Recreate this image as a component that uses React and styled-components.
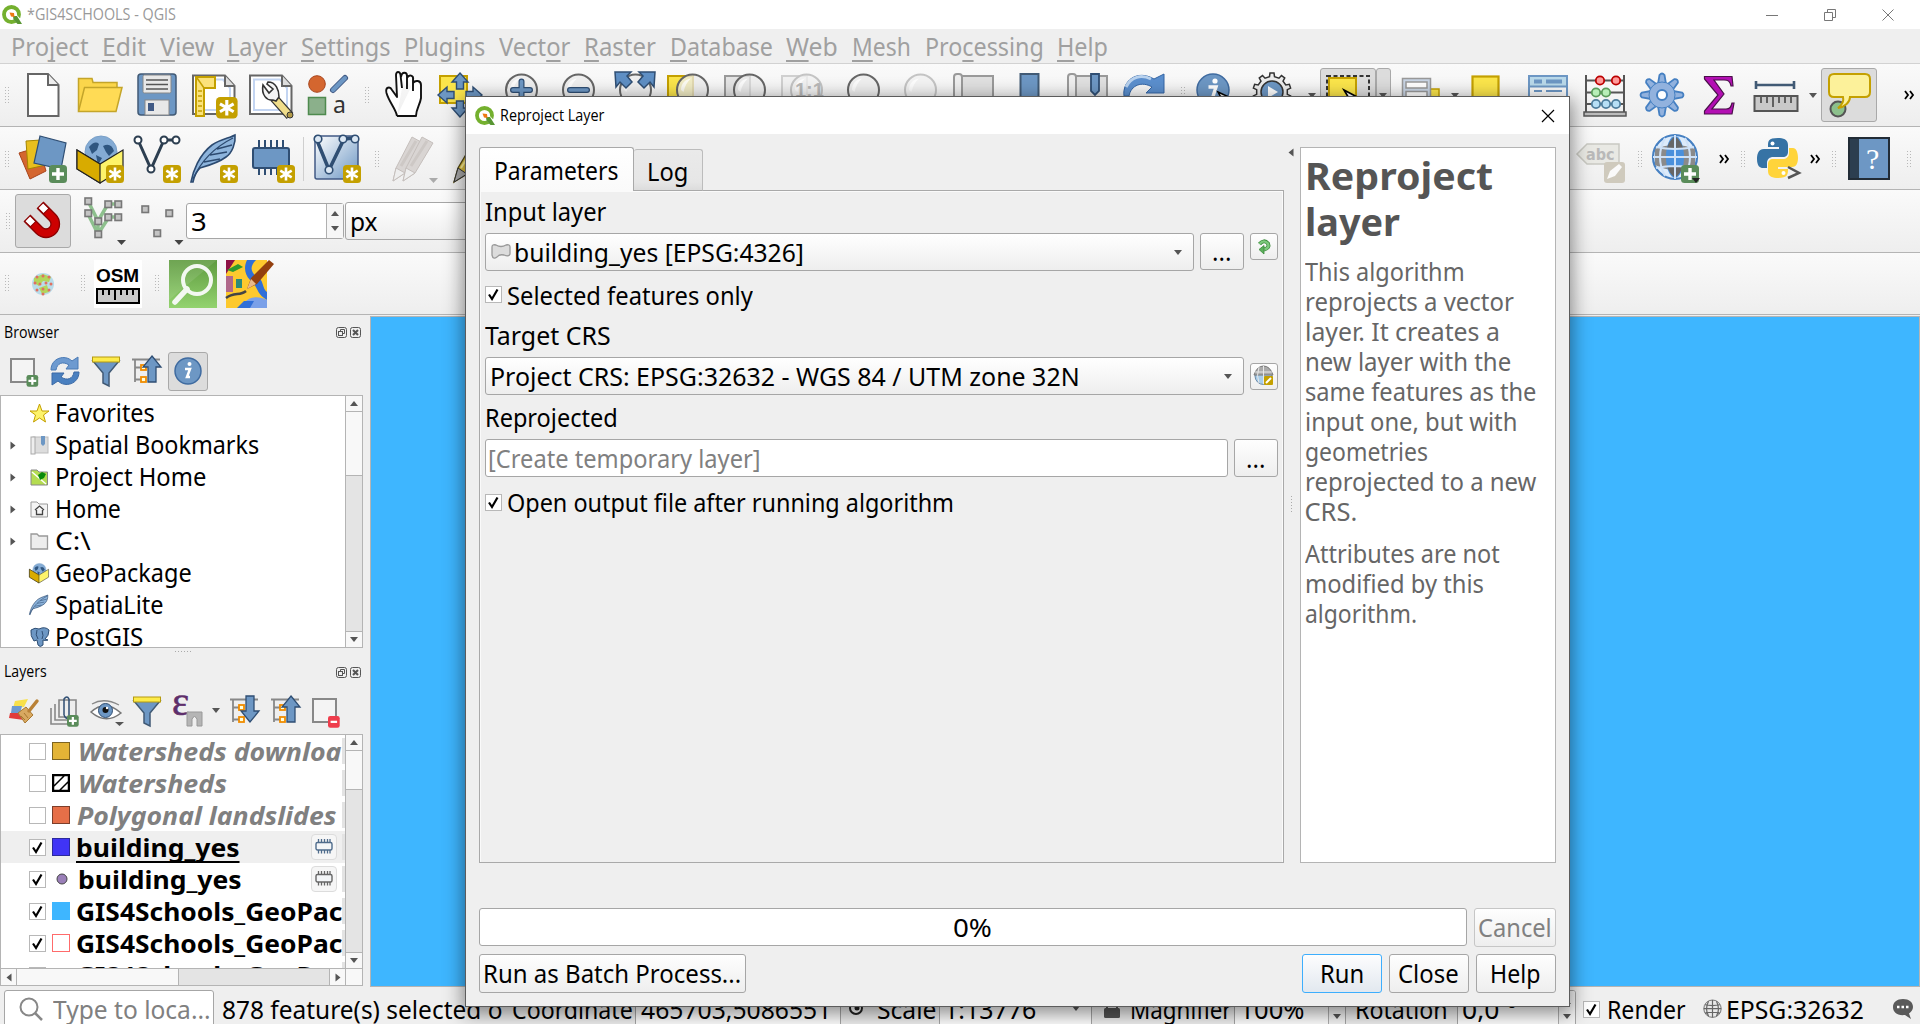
import React, { useLayoutEffect, useRef, useState } from "react";
import styled, { createGlobalStyle, css } from "styled-components";

const UI = `"Noto Sans", "DejaVu Sans", sans-serif`;
const LINE = "#b4b4b4";

const Global = createGlobalStyle`
  *{box-sizing:border-box}
  html,body{margin:0;padding:0;width:1920px;height:1024px;overflow:hidden;background:#efefef}
  body{font-family:${UI};font-size:25.5px;line-height:1;color:#000}
  svg{display:block;overflow:visible;flex:none}
`;

/* ---------- text ---------- */
const FitBox = styled.span`
  display: inline-block; flex: none; white-space: pre; line-height: 32px; padding-bottom: 1px;
  width: ${(p) => p.$w}px;
`;
const FitInner = styled.span`
  display: inline-block; transform-origin: 0 50%; margin-left: -1.5px;
  u { text-decoration-thickness: 2px; text-underline-offset: 4px; text-decoration-skip-ink: none; }
`;
function Fit({ w, children }) {
  const ref = useRef(null);
  const [scale, setScale] = useState(1);
  useLayoutEffect(() => {
    setScale(w / (ref.current.offsetWidth - 2));
  }, [w]);
  return (
    <FitBox $w={w}>
      <FitInner ref={ref} style={{ transform: `scaleX(${scale})` }}>{children}</FitInner>
    </FitBox>
  );
}

/* ---------- frame ---------- */
const Window = styled.div`
  width: 1920px; height: 1024px; display: flex; flex-direction: column; position: relative; overflow: hidden; background: #efefef;
`;
const TitleBar = styled.header`
  height: 29px; background: #fff; display: flex; align-items: center; padding: 0 8px 0 2px; gap: 6px;
  font-family: "Open Sans", sans-serif; font-size: 15.5px; color: #999; flex: none;
`;
const WinButtons = styled.div`margin-left: auto; display: flex; gap: 46px; padding-right: 18px;`;
const MenuBar = styled.nav`
  height: 35px; display: flex; align-items: center; gap: 15.6px; padding: 0 0 0 12px; color: #a0a0a0; font-size: 25.3px;
  border-bottom: 1px solid #d2d2d2; flex: none;
`;
const Toolbar = styled.div`
  height: ${(p) => p.$h || 63}px; display: flex; align-items: center; flex: none; padding-top: ${(p) => p.$t || 0}px;
  background: linear-gradient(#fafafa, #eee); border-bottom: 1px solid ${LINE};
`;
const Slot = styled.div`
  width: ${(p) => p.$w || 57}px; height: 100%; display: flex; align-items: center; justify-content: center; flex: none;
`;
const Pressed = styled.div`
  width: ${(p) => p.$w}px; height: ${(p) => p.$h || 54}px; border: 1px solid #a9a9a9; border-radius: 3px; background: #dcdcdc;
  display: flex; align-items: center; justify-content: center; flex: none;
`;
const HandleGrip = styled.svg`margin-left: 1px;`;
const Handle = () => (
  <HandleGrip width="5" height="17" viewBox="0 0 5 17" shapeRendering="crispEdges">
    <path d="M.5 0V17M3.5 0V17" stroke="#b9b9b9" strokeDasharray="1 2" />
  </HandleGrip>
);
const Sep = styled.div`width: 1px; height: 44px; background: #cfcfcf;`;
const Tri = styled.div`
  width: 0; height: 0; flex: none; border: 4.5px solid transparent; border-top: 5px solid ${(p) => p.$c || "#555"}; border-bottom: 0;
  margin-top: ${(p) => p.$t || 0}px;
  ${(p) => p.$dir === "up" && css`transform: rotate(180deg);`}
  ${(p) => p.$dir === "left" && css`transform: rotate(90deg);`}
  ${(p) => p.$dir === "right" && css`transform: rotate(-90deg);`}
`;
const Spacer = styled.div`flex: 1;`;
const Main = styled.main`flex: none; height: 672px; display: flex;`;
const Side = styled.aside`width: 370px; display: flex; flex-direction: column; padding-right: 7px;`;
const MapView = styled.div`
  flex: 1; margin-top: 1px; background: #3eb6ff; border: 1px solid ${LINE};
`;
const Dots = styled.div`
  flex: none; width: ${(p) => (p.$v ? 1 : 17)}px; height: ${(p) => (p.$v ? 17 : 1)}px; margin: 0 auto;
  background: repeating-linear-gradient(${(p) => (p.$v ? "180deg" : "90deg")}, #aaa 0 1px, transparent 1px 3px);
`;

/* ---------- docks ---------- */
const DockTitle = styled.div`
  height: ${(p) => p.$h}px; display: flex; align-items: center; padding: ${(p) => p.$t}px 2px 0 5px; font: 15.5px "Open Sans", sans-serif; gap: 3px; flex: none;
  ${FitBox} { padding-bottom: 2px; }
`;
const DockTools = styled.div`
  height: ${(p) => p.$h}px; display: flex; align-items: center; padding: 0 0 2px 3px; flex: none;
`;
const ListFrame = styled.div`
  height: ${(p) => p.$h}px; border: 1px solid ${LINE}; background: #fff; display: flex; flex: none;
`;
const Rows = styled.div`flex: 1; overflow: hidden; padding-top: ${(p) => p.$t || 0}px;`;
const TreeRow = styled.div`
  height: 32px; display: flex; align-items: center; padding-left: 8px;
  ${FitBox} { padding-bottom: 2px; }
`;
const TreeArrow = styled.div`width: 20px;display:flex;`;
const TreeIcon = styled.div`width: 27px; display:flex;`;
const LayerRow = styled.div`
  height: 32px; display: flex; align-items: center; padding-left: 28px; overflow: hidden;
  background: ${(p) => (p.$sel ? "#efefef" : "#fff")}; font-weight: 700; color: ${(p) => (p.$off ? "#808080" : "#000")};
  font-style: ${(p) => (p.$off ? "italic" : "normal")};
`;
const Swatch = styled.div`
  width: 18px; height: 18px; margin: 0 ${(p) => p.$mr}px 0 6px; border: 1px solid ${(p) => p.$b}; background: ${(p) => p.$c}; flex: none;
`;
const RowName = styled.div`width: 0; flex: 1; overflow: hidden; height: 32px; padding-left: 2px; display: flex; align-items: center;`;
const MemButton = styled.div`
  width: 26px; height: 26px; border: 1px solid #dcdcdc; border-radius: 4px; background: #f6f6f6; display: flex; align-items: center; justify-content: center; margin-right: 5px;
`;
const RowMark = styled.div`width: 3px; height: 26px; background: #e3e3e3; flex: none; margin-left: auto;`;
const VScroll = styled.div`width: 17px; border-left: 1px solid ${LINE}; display: flex; flex-direction: column; background: #e4e4e4; flex: none;`;
const HScroll = styled.div`height: 17px; display: flex; background: #e4e4e4; border: 1px solid ${LINE}; border-top: 0; flex: none;`;
const SBtn = styled.div`
  width: ${(p) => p.$w || 16}px; height: ${(p) => p.$h || 16}px; background: #f8f8f8; display: flex; align-items: center; justify-content: center; flex: none;
  ${(p) => p.$b && css`border-${p.$b}: 1px solid ${LINE};`}
`;

/* ---------- controls ---------- */
const Field = styled.div`
  height: ${(p) => p.$h || 38}px; width: ${(p) => (p.$w ? p.$w + "px" : "auto")}; border: 1px solid #a6a6a6; border-radius: 3px;
  background: ${(p) => (p.$combo ? "linear-gradient(#fff,#eee)" : "#fff")}; display: flex; align-items: center; padding-left: ${(p) => p.$pl || 5}px;
  color: ${(p) => p.$c || "#000"}; flex: ${(p) => (p.$w ? "none" : 1)};
`;
const Button = styled.button`
  margin: 0; padding: 0; font: inherit; width: ${(p) => p.$w}px; height: ${(p) => p.$h || 39}px; flex: none;
  border: 1px solid ${(p) => (p.$primary ? "#3daefd" : p.$dim ? "#c6c6c6" : "#a6a6a6")}; border-radius: 3px;
  background: ${(p) => (p.$primary ? "linear-gradient(#fdfdfe,#e2e8ef)" : "linear-gradient(#fefefe,#eee)")};
  color: ${(p) => (p.$dim ? "#808080" : "#000")}; display: flex; align-items: center; justify-content: center;
`;
const CheckFrame = styled.div`
  width: 17px; height: 17px; border: 1px solid #b8b8b8; background: #fff; display: flex; align-items: center; justify-content: center; flex: none;
`;
function Check({ on }) {
  return (
    <CheckFrame>
      {on && (
        <svg width="13" height="13" viewBox="0 0 13 13"><path d="M2 6.5L5 11L10.5 1.5" fill="none" stroke="#000" strokeWidth="2.2" /></svg>
      )}
    </CheckFrame>
  );
}
const SpinSide = styled.div`
  width: 17px; height: 100%; border-left: 1px solid #b0b0b0; margin-left: auto; display: flex; flex-direction: column; justify-content: center; align-items: center; gap: 10px; background: #f6f6f6;
`;

/* ---------- dialog ---------- */
const Dialog = styled.section`
  position: absolute; left: 465px; top: 96px; width: 1105px; height: 911px; border: 1px solid #5c5c5c; background: #efefef;
  box-shadow: 0 5px 18px 2px rgba(0, 0, 0, 0.45); display: flex; flex-direction: column;
`;
const DialogTitle = styled.div`
  height: 37px; background: #fff; display: flex; align-items: center; padding: 0 15px 0 9px; gap: 6px; font: 15.5px "Open Sans", sans-serif; flex: none;
`;
const DialogBody = styled.div`height: 716px; margin: 13px 13px 0; display: flex; flex: none;`;
const TabSide = styled.div`width: 805px; display: flex; flex-direction: column;`;
const Tabs = styled.div`height: 44px; display: flex; align-items: flex-end; margin-bottom: -1px; z-index: 1;`;
const Tab = styled.div`
  width: ${(p) => p.$w}px; height: ${(p) => (p.$on ? 44 : 42)}px; border: 1px solid ${(p) => (p.$on ? "#a9a9a9" : "#bcbcbc")};
  border-bottom: ${(p) => (p.$on ? 0 : "1px solid #a9a9a9")}; border-left: ${(p) => (p.$on ? "1px solid #a9a9a9" : 0)}; border-radius: 3px 3px 0 0;
  background: ${(p) => (p.$on ? "linear-gradient(#fff,#fafafa)" : "linear-gradient(#eaeaea,#e6e6e6 80%,#dcdcdc)")};
  display: flex; align-items: center; justify-content: center; padding-top: 3px;
  ${FitBox} { padding-bottom: ${(p) => (p.$on ? 2 : 1)}px; }
`;
const Pane = styled.div`
  flex: 1; border: 1px solid #a9a9a9; box-shadow: inset 1px 1px 0 #fafafa, inset -1px 0 0 #fafafa; padding: 0 6px 0 5px;
`;
const Label = styled.div`
  height: ${(p) => p.$h}px; display: flex; align-items: center; padding-left: 1px; padding-bottom: ${(p) => p.$pb || 0}px;
`;
const Row = styled.div`height: 38px; display: flex; align-items: ${(p) => p.$a || "flex-start"}; gap: 6px;`;
const CheckLine = styled.div`height: ${(p) => p.$h}px; display: flex; align-items: center; gap: 6px;`;
const CheckText = styled.div`padding-top: 1px; display: flex;`;
const Split = styled.div`width: 16px; display: flex; flex-direction: column; align-items: center; padding-top: 3px; padding-right: 2px;`;
const HelpBox = styled.article`
  width: 256px; border: 1px solid #b4b4b4; background: #fff; color: #666; padding: 5px;
`;
const HelpTitle = styled.h1`
  margin: 0; font-size: 37px; color: #555; font-weight: 700; display: flex; flex-direction: column;
  ${FitBox} { line-height: 46px; padding: 0; }
`;
const Para = styled.div`
  display: flex; flex-direction: column; margin-top: ${(p) => p.$t}px;
  ${FitBox} { line-height: 30px; padding: 0; }
`;
const ProgressRow = styled.div`height: 38px; margin: 45px 13px 0; display: flex; gap: 7px; flex: none;`;
const Progress = styled.div`
  width: 988px; border: 1px solid #a6a6a6; border-radius: 3px; background: #fff; display: flex; align-items: center; justify-content: center;
`;
const ButtonRow = styled.div`height: 39px; margin: 8px 13px 0; display: flex; gap: 7px; flex: none;`;

/* ---------- status ---------- */
const Status = styled.footer`height: 37px; display: flex; align-items: flex-start; overflow: hidden; flex: none; padding: 3px 0 0 4px;`;
const StatusCell = styled.div`
  width: ${(p) => p.$w}px; height: 38px; display: flex; align-items: center; flex: none; padding-left: ${(p) => p.$pl || 0}px; overflow: hidden;
  ${(p) => p.$box && css`background: #fff; border: 1px solid #a6a6a6; border-radius: 3px;`}
  color: ${(p) => p.$c || "#000"};
`;

/* ---------- drawings ---------- */
const I = ({ s = 48, children, vb = 48 }) => (
  <svg width={s} height={s} viewBox={`0 0 ${vb} ${vb}`}>{children}</svg>
);
const Star = ({ x = 30, y = 28 }) => (
  <g transform={`translate(${x} ${y})`}>
    <rect width="18" height="18" rx="3.5" fill="#c4a000" />
    <path d="M9 2.5V15.5M3.3 5.7L14.7 12.3M3.3 12.3L14.7 5.7" stroke="#fff" strokeWidth="2.6" />
  </g>
);
const Plus = ({ x = 30, y = 28, s = 1, minus }) => (
  <g transform={`translate(${x} ${y}) scale(${s})`}>
    <rect width="18" height="18" rx="3.5" fill={minus ? "#ef3d4c" : "#5a8c5a"} />
    {minus ? <path d="M4 9H14" stroke="#fff" strokeWidth="3.4" /> : <path d="M9 3V15M3 9H15" stroke="#fff" strokeWidth="3.4" />}
  </g>
);
const QLogo = ({ s = 20 }) => (
  <I s={s} vb={20}>
    <circle cx="9.5" cy="9.5" r="7.5" fill="none" stroke="#74b02e" strokeWidth="3.8" />
    <path d="M10 9L20 19.5" stroke="#fff" strokeWidth="5.5" />
    <path d="M11 11L15 11L20 19H15.500L11.500 15Z" fill="#589632" />
    <path d="M7.500 7.500L12 8L12.500 12L9 11.500Z" fill="#ee7913" />
  </I>
);
const NewDoc = () => <I><path d="M9 3H29L39.5 14V45H9Z" fill="#fff" stroke="#666" strokeWidth="2" /><path d="M29 3V14H39.5" fill="#eee" stroke="#666" strokeWidth="2" /></I>;
const Open = () => <I><path d="M2.5 40V7.5H16L17 11.5H41V17" fill="#fbd64b" stroke="#c4a52a" strokeWidth="1.5" /><path d="M8.5 16.5H46L40 40.5H2.5Z" fill="#ffdb55" stroke="#c4a52a" strokeWidth="1.5" /></I>;
const Save = () => (
  <I>
    <rect x="5" y="3" width="38" height="41" rx="3" fill="#6d97c4" stroke="#415a75" strokeWidth="1.5" />
    <rect x="10" y="4" width="28" height="18" rx="1.5" fill="#e8e8e8" stroke="#888" />
    <path d="M13 9H35M13 13.5H35M13 18H35" stroke="#555" strokeWidth="1.6" />
    <rect x="12" y="29" width="24" height="15" fill="#e8e8e8" stroke="#888" /><rect x="15" y="32" width="6" height="8" fill="#415a85" />
  </I>
);
const Page = () => <><path d="M3 4.5H35L44.5 15V43H3Z" fill="#fff" stroke="#666" strokeWidth="2" /><path d="M7 8.5H33L40 17V39H7Z" fill="none" stroke="#c3d5f2" strokeWidth="2" /><path d="M35 4.5V15H44.5" fill="#ddd" stroke="#666" strokeWidth="2" /></>;
const Layout = () => <I><Page /><path d="M6 6H25V17H14V45H6Z" fill="#fbe27a" stroke="#c4a000" strokeWidth="2" /><path d="M7 7L14 17" stroke="#c4a000" strokeWidth="1.500" /><path d="M8 20H12M8 25H12M8 30H12M8 35H12M8 40H12" stroke="#c4a000" strokeWidth="1.5" /><g transform="translate(26 26) scale(1.2)"><Star x={0} y={0} /></g></I>;
const Manager = () => (
  <I><Page /><path d="M27 27L43 45" stroke="#333" strokeWidth="9" /><path d="M27 27L42.500 44.500" stroke="#f0dd8a" strokeWidth="6.5" />
    <path d="M16 14C14 24 20 30 26 29L29 30L32 26C32 19 29 11 21 11L20 13L26 18L22 22Z" fill="#f4f4f4" stroke="#333" strokeWidth="1.6" /><circle cx="43" cy="44" r="3" fill="#b39b48" stroke="#333" /></I>
);
const StyleMgr = () => (
  <I><circle cx="13" cy="13" r="8.300" fill="#d4662f" stroke="#a8441c" /><path d="M29 19L41 7" stroke="#415a85" strokeWidth="6" strokeLinecap="round" /><path d="M29 19L41 7" stroke="#6d97c4" strokeWidth="4" strokeLinecap="round" />
    <rect x="4.500" y="26.500" width="17" height="17" fill="#8bb08b" stroke="#4e8a4e" strokeWidth="1.5" /><text x="29" y="42" fontSize="23" fill="#333" fontFamily="Noto Sans">a</text></I>
);
const Hand = () => (
  <I><path d="M16 45C15 38 8 31 5.500 22C4 16 9 15 11 19L16 26L15 4C15 0 19 0 19.500 4L21 17M20 6C21 0 26 1 26 5V18M26 7C28 3 33 4 32 9V20M32 12C34 9 40 9 40 14V27C39 34 35 38 35 45H16" fill="#fff" stroke="#111" strokeWidth="1.9" strokeLinejoin="round" /></I>
);
const Pan = () => (
  <I><rect x="3" y="5" width="27" height="27" fill="#fbe54b" stroke="#c4a000" strokeWidth="2" />
    {[0, 90, 180, 270].map((a) => <path key={a} transform={`rotate(${a} 23 24)`} d="M23 2L31 11H26.500V18H19.500V11H15Z" fill="#6d97c4" stroke="#2f4e73" strokeWidth="1.4" />)}</I>
);
const Lens = ({ dim, children, pre }) => (
  <I>{pre}<circle cx="27.500" cy="19" r="15.500" fill={dim ? "#f2f2f2" : "#ececec"} fillOpacity=".75" stroke={dim ? "#c4c4c4" : "#666"} strokeWidth="2" />
    <path d="M16 19C16 13 20 8 26 7.500C22 11 20 15 18.500 21Z" fill="#fff" opacity=".8" />{children}</I>
);
const ZoomSign = ({ minus }) => (
  <Lens><path d={minus ? "M19 19H36" : "M19 19H36M27.500 10.500V27"} stroke="#2f4e73" strokeWidth="6" strokeLinecap="round" /><path d={minus ? "M19 19H36" : "M19 19H36M27.500 10.500V27"} stroke="#6d97c4" strokeWidth="3.6" strokeLinecap="round" /></Lens>
);
const ZoomFull = () => <Lens><path d="M7 1H23L19 5L24 11L18 17L12 11L8 16Z" fill="#5f8fc4" stroke="#2f4e73" strokeWidth="1.5" /><path d="M47 1H31L35 5L30 11L36 17L42 11L46 16Z" fill="#5f8fc4" stroke="#2f4e73" strokeWidth="1.5" /></Lens>;
const Sq = ({ f, s }) => <rect x="3" y="5" width="25" height="25" fill={f} stroke={s} strokeWidth="2" />;
const Book = ({ mark }) => (
  <I><rect x="8" y="5" width="35" height="38" fill="#e0e0e0" stroke="#999" strokeWidth="2" /><rect x="4" y="3" width="8" height="40" rx="3" fill="#eee" stroke="#999" strokeWidth="2" />
    {mark && <path d="M27 3H35V20L31 24L27 20Z" fill="#6d97c4" stroke="#2f4e73" strokeWidth="1.800" />}</I>
);
const Marker = () => <I><rect x="13.500" y="3" width="18" height="40" fill="#6d97c4" stroke="#415a75" strokeWidth="2" /></I>;
const Redo = () => <I><path d="M3 25C1 10 16 -2 33 8L43 3V22H25L31 16C21 10 10 14 8 25Z" fill="#5b8fce" stroke="#3465a4" strokeWidth="1" /><path d="M5 16C10 6 20 3 30 8" stroke="#b9d2ee" strokeWidth="3" fill="none" /></I>;
const Info = ({ s, arrow }) => (
  <I s={s}><circle cx="24" cy="19" r="16" fill="#6d97c4" stroke="#3f6ba0" strokeWidth="1.500" />
    <circle cx="26" cy="10" r="2.600" fill="#fff" /><path d="M19.500 16H27L23.500 27H26.500" stroke="#fff" strokeWidth="3.400" fill="none" />{arrow && <path d="M29 21L40 26L34 30Z" fill="#eee" stroke="#000" strokeWidth="1.500" />}</I>
);
const gearPath = (n, r1, r2, k) => {
  const pts = [];
  for (let i = 0; i < n; i++)
    [[-k, r1], [-k * 0.65, r2], [k * 0.65, r2], [k, r1]].forEach(([o, r]) => {
      const a = ((i + o) / n) * 2 * Math.PI;
      pts.push(`${(24 + r * Math.sin(a)).toFixed(2)} ${(24 - r * Math.cos(a)).toFixed(2)}`);
    });
  return `M${pts.join("L")}Z`;
};
const GearRun = () => <I><g transform="translate(3 -3)"><path d={gearPath(10, 15.500, 19, 0.26)} fill="#ececec" stroke="#333" strokeWidth="1.500" /><circle cx="24" cy="24" r="11" fill="#6d97c4" stroke="#333" strokeWidth="1.500" /><path d="M20 18L30 24L20 30Z" fill="#fff" /></g></I>;
const SelectIcon = () => <I><rect x="3" y="5" width="42" height="30" fill="#dcdcdc" stroke="#333" strokeWidth="2" strokeDasharray="4 2.500" /><rect x="5" y="7" width="27" height="26" fill="#fbe54b" stroke="#c4a000" strokeWidth="2" /><path d="M20 19L35 27L26 29Z" fill="#fff" stroke="#000" strokeWidth="1.600" /></I>;
const FormIcon = () => <I><rect x="24" y="18" width="20" height="16" fill="#fbe54b" stroke="#c4a000" strokeWidth="1.500" /><rect x="7.500" y="7.500" width="28" height="36" fill="#c9d5e5" stroke="#999" strokeWidth="1.500" /><rect x="11" y="11" width="21" height="6" fill="#fff" stroke="#999" strokeWidth="1.500" /><rect x="11" y="20.500" width="21" height="6" fill="#fff" stroke="#999" strokeWidth="1.500" /></I>;
const Yellow = () => <I><rect x="5.500" y="5.500" width="26" height="26" fill="#fbe54b" stroke="#c4a000" strokeWidth="2.200" /></I>;
const Table = () => <I><rect x="5" y="5" width="38" height="38" fill="#fafafa" stroke="#6d97c4" strokeWidth="2" /><rect x="6" y="6" width="36" height="9" fill="#b9d9ea" /><path d="M10 10.500H18M22 10.500H38" stroke="#6d97c4" strokeWidth="4" /><path d="M6 15.500H42M10 20H18M22 20H38M10 26H18M22 26H38" stroke="#6d97c4" strokeWidth="2" /></I>;
const Abacus = () => (
  <I><path d="M5 4V41M43 4V41M5 9.500H43M5 21.500H43M5 33H43" stroke="#555" strokeWidth="2" />
    {[[19, 9.5, "#ff9a9a", "#b00"], [35, 9.5, "#ff9a9a", "#b00"], [15, 21.5, "#b8eeb8", "#5a9a5a"], [25, 21.5, "#b8eeb8", "#5a9a5a"], [15, 33, "#b8dff5", "#4f7d9c"], [25, 33, "#b8dff5", "#4f7d9c"], [35, 33, "#b8dff5", "#4f7d9c"]].map(([x, y, f, s], i) => <circle key={i} cx={x} cy={y} r="4.200" fill={f} stroke={s} strokeWidth="1.800" />)}
    <rect x="3" y="41" width="42" height="4" fill="#bbb" stroke="#555" strokeWidth="1.500" /></I>
);
const BlueGear = () => (
  <I>{[0, 45, 90, 135, 180, 225, 270, 315].map((a) => <path key={a} transform={`rotate(${a} 24 24)`} d="M20 13L21.500 4Q24 1 26.500 4L28 13" fill="#92b2de" stroke="#4680c2" strokeWidth="1.800" />)}
    <circle cx="24" cy="24" r="13" fill="#92b2de" stroke="#4680c2" strokeWidth="1" /><circle cx="24" cy="24" r="12" fill="#92b2de" /><circle cx="24" cy="24" r="5" fill="#fff" stroke="#4680c2" strokeWidth="2" /></I>
);
const Sigma = () => <I><path d="M9.500 5.500H37L38 15H36C35 10 33 9 29 9H19L29 23L17 38H31C35 38 36 36 37 32H39L37 43H9.500V40L23 24L9.500 8Z" fill="#b30fb3" stroke="#4a124a" strokeWidth="1.200" /></I>;
const Ruler = () => <I><path d="M4 14H42M4 10V18M42 10V18" stroke="#415a75" strokeWidth="2.600" /><rect x="2.500" y="25" width="43" height="15" fill="#c9c9c9" stroke="#555" strokeWidth="2" /><path d="M9 26V32M15 26V32M21 26V36M27 26V32M33 26V32M39 26V32" stroke="#555" strokeWidth="1.800" /></I>;
const Tip = () => <I><circle cx="13" cy="38" r="7.500" fill="#8cc08c" stroke="#555" strokeWidth="2" /><path d="M11 3H42Q47 3 47 8V21Q47 26 42 26H27C27 31 22 36 15 37C19 34 21 30 20 26H11Q6 26 6 21V8Q6 3 11 3Z" fill="#fcf19a" stroke="#c4a000" strokeWidth="2" transform="translate(-2 0)" /></I>;
const More = () => <I s={12} vb={12}><path d="M2 2L5 6L2 10M7 2L10 6L7 10" fill="none" stroke="#000" strokeWidth="1.800" /></I>;

const AddLayer = () => <I><path d="M0 18L20 12L27 36L11 44Z" fill="#d4662f" stroke="#a8441c" /><path d="M7 6L22 5L27 30L9 34Z" fill="#e8bf1e" stroke="#a58500" /><path d="M21 1L47 8L42 34L15 28Z" fill="#6d97c4" stroke="#2f4e73" strokeWidth="1.200" /><Plus x={30} y={30} /></I>;
const Globe = ({ cx = 25, cy = 17, r = 16 }) => <g><circle cx={cx} cy={cy} r={r} fill="#84abd4" stroke="#7aa0c8" /><path d={`M${cx - 12} ${cy - 5}Q${cx - 6} ${cy - 12} ${cx - 2} ${cy - 8}L${cx - 4} ${cy - 2}L${cx - 9} ${cy + 2}ZM${cx + 2} ${cy - 6}Q${cx + 10} ${cy - 10} ${cx + 13} ${cy - 1}L${cx + 8} ${cy + 4}L${cx + 5} ${cy}ZM${cx - 5} ${cy + 3}L${cx + 1} ${cy + 6}L${cx - 3} ${cy + 13}Z`} fill="#2f5680" /></g>;
const Gpkg = ({ s, star }) => (
  <I s={s}><Globe /><path d="M1 15L24 29L47 15V34L24 48L1 34Z" fill="#fdf36a" stroke="#222" strokeWidth="1.200" /><path d="M1 15L24 29V48L1 34Z" fill="#d8ab00" stroke="#222" strokeWidth="1.200" />{star && <Star x={30} y={30} />}</I>
);
const Shp = () => <I><path d="M5 5L18 34L31 5H43" fill="none" stroke="#2c3e50" strokeWidth="3" />{[[5, 5], [18, 34], [31, 5], [43, 5]].map(([x, y]) => <circle key={x} cx={x} cy={y} r="3.500" fill="#fff" stroke="#2c3e50" strokeWidth="2" />)}<Star x={30} y={30} /></I>;
const Feather = ({ s, star }) => <I s={s}><path d="M1 47C3 36 9 20 22 10C31 4 40 3 45 0C46 8 42 18 36 22C28 28 17 31 10 33C6 37 4 42 3 47Z" fill="#8db4dc" stroke="#2c4a70" strokeWidth="1.600" /><path d="M3 44C11 26 25 12 43 3M14 27L30 24M20 20L37 17M27 14L42 10" stroke="#2c4a70" strokeWidth="1.300" fill="none" />{star && <Star x={30} y={30} />}</I>;
const Chip = () => <I><path d="M12 5V14M18 5V14M24 5V14M30 5V14M36 5V14M12 30V40M18 30V40M24 30V40M30 30V40M36 30V40" stroke="#2f4e73" strokeWidth="2" /><rect x="6" y="13" width="36" height="20" rx="2" fill="#6d97c4" stroke="#2f4e73" strokeWidth="2" /><Star x={30} y={30} /></I>;
const MemChip = ({ c }) => <I s={18} vb={18}><path d="M3.500 1V4M6.500 1V4M9.500 1V4M12.500 1V4M15 1V4M3.500 12V15.500M6.500 12V15.500M9.500 12V15.500M12.500 12V15.500M15 12V15.500" stroke={c} strokeWidth="1.300" /><rect x="1" y="4.500" width="16" height="7.500" rx="1.500" fill="#f4f6f8" stroke={c} strokeWidth="1.400" /></I>;
const Virtual = () => (
  <I><defs><linearGradient id="vg" x2="1" y2="1"><stop offset="0" stopColor="#fff" /><stop offset="1" stopColor="#6d97c4" /></linearGradient></defs><rect x="2" y="1" width="43" height="43" rx="2" fill="url(#vg)" stroke="#415a85" strokeWidth="1.500" />
    <path d="M3 3L16 35L31 4L41 3" fill="none" stroke="#2f4e73" strokeWidth="3.500" />{[[5, 4], [16, 35], [30, 4], [42, 4]].map(([x, y]) => <circle key={x} cx={x} cy={y} r="3.800" fill="#dce8f4" stroke="#2f4e73" strokeWidth="1.600" />)}<Star x={30} y={30} /></I>
);
const Pencils = () => <I><g fill="#d9d5d3" stroke="#c5bfbc"><path d="M5 46L8 33L24 2L33 7L17 38Z" /><path d="M15 46L18 33L34 2L45 8L27 38Z" /><path d="M5 46L8 33L17 38ZM15 46L18 33L27 38Z" fill="#eee" /></g><path d="M13 31L28 6M23 31L39 6" stroke="#cdc8c5" strokeWidth="3" /><path d="M41 43H50L45.500 48Z" fill="#aaa" /></I>;
const Pencil = () => <I><path d="M1 47L5 33L24 1L34 7L14 39Z" fill="#e0c341" stroke="#554a14" strokeWidth="1.300" /><path d="M1 47L5 33L14 39Z" fill="#aaa" stroke="#333" /><path d="M8 33L26 4" stroke="#fff29a" strokeWidth="2" /></I>;
const LabelIcon = () => <I><path d="M0 19L10 9H42V29H10Z" fill="#e9e9e4" stroke="#c9c9c2" strokeWidth="1.500" /><text x="9" y="25" fontSize="16" fontWeight="700" fill="#b9b9b9" fontFamily="DejaVu Sans Condensed, DejaVu Sans">abc</text><rect x="27" y="27" width="21" height="21" rx="3" fill="#cfcabd" /><path d="M30 44L33 36L42 29L45 32L38 41Z" fill="#fafafa" /></I>;
const WebGlobe = ({ s, plus, grey }) => (
  <I s={s}><circle cx="24" cy="22" r="22" fill={grey ? "#e8e8e8" : "#dcebfb"} stroke={grey ? "#666" : "#4680c2"} strokeWidth="2.200" />
    {!grey && <><path d="M4 14Q24 6 44 14V30Q24 40 4 30Z" fill="#8a8a8a" /><ellipse cx="24" cy="22" rx="9" ry="21" fill="#4a90dc" /><path d="M24 1Q30 6 32 13H16Q18 6 24 1ZM24 43Q30 38 32 31H16Q18 38 24 43Z" fill="#666" /></>}
    <path d="M2 22H46M24 0V44M5 12Q24 16 43 12M5 33Q24 29 43 33M14 3Q4 22 14 41M34 3Q44 22 34 41" fill="none" stroke={grey ? "#666" : "#cfe2f8"} strokeWidth={grey ? 3 : 2} />{plus && <><Plus x={30} y={30} /><path d="M41 43H49L45 48Z" fill="#222" /></>}</I>
);
const Python = () => (
  <I><path d="M23 3C13 3 13 6 13 12H24V14H9C3 14 2 20 2 24C2 31 5 33 8 33H12V28C12 24 15 22 18 22H28C31 22 33 20 33 17V10C33 4 28 3 23 3Z" fill="#3673a5" /><circle cx="17.500" cy="8.500" r="2" fill="#fff" />
    <path d="M34 13V18C34 22 31 24 28 24H18C15 24 13 26 13 29V36C13 42 18 43 23 43C33 43 33 39 33 34H23V32H37C42 32 43 27 43 23C43 17 41 13 38 13Z" fill="#ffd43b" /><circle cx="28.500" cy="38" r="2" fill="#fff" /><path d="M33 32L44 38L33 43" fill="none" stroke="#555" strokeWidth="2.500" /></I>
);
const HelpBook = () => <I><rect x="4" y="3" width="40" height="41" fill="#6d97c4" stroke="#222c36" strokeWidth="2" /><rect x="5" y="4" width="9" height="39" fill="#2c3e50" /><text x="21" y="34" fontSize="30" fill="#fff" fontFamily="Liberation Serif">?</text></I>;
const Magnet = () => (
  <I><g transform="translate(3 3) rotate(-45 24 24)"><path d="M10.500 7V24A13.500 13.500 0 0 0 37.500 24V7H29V24A5 5 0 0 1 19 24V7Z" fill="#cc0000" stroke="#8b0000" strokeWidth="1.300" /><rect x="11" y="7" width="7.500" height="8" fill="#fff" stroke="#8b0000" /><rect x="29.500" y="7" width="7.500" height="8" fill="#fff" stroke="#8b0000" /></g></I>
);
const node = ([x, y]) => <rect key={x + "-" + y} x={x - 3} y={y - 3} width="6.500" height="6.500" fill="#c4c4c4" stroke="#777" strokeWidth="1.600" />;
const SnapV = () => <I><path d="M9 4L19 24L29 7H40M9 17L19 37L30 20H40M19 24V37" fill="none" stroke="#8dc08d" strokeWidth="3.500" />{[[9, 4], [19, 24], [29, 7], [39, 7], [9, 16], [19, 37], [29, 20], [39, 20]].map(node)}<path d="M38 43H47L42.500 48Z" fill="#444" /></I>;
const SnapDots = () => <I>{[[8, 12], [32, 16], [20, 36]].map(node)}<path d="M37.500 43H46.500L42 48Z" fill="#444" /></I>;
const MiniGlobe = () => <I s={24} vb={24}><circle cx="12" cy="12" r="11" fill="#b8dcea" /><path d="M3 6L12 2L20 5L18 10L12 9L8 14L3 11ZM8 16L16 13L18 20L11 22Z" fill="#b3d65c" />{[[6, 5], [12, 4], [18, 5], [4, 11], [9, 12], [15, 11], [20, 12], [6, 18], [12, 17], [18, 18], [12, 22]].map(([x, y], i) => <circle key={i} cx={x} cy={y} r="1.500" fill="#e07060" />)}</I>;
const Osm = () => <I><rect width="48" height="48" fill="#fff" /><text x="2" y="22" fontSize="19" fontWeight="700" textLength="43" fontFamily="Liberation Sans">OSM</text><rect x="3" y="29" width="42" height="14" fill="#c9c9c9" stroke="#000" strokeWidth="2" /><path d="M9 30V35M15 30V35M21 30V40M27 30V35M33 30V35M39 30V35" stroke="#000" strokeWidth="2" /></I>;
const GreenSearch = () => <I><defs><linearGradient id="gs" x2="0" y2="1"><stop offset="0" stopColor="#5e9a3f" /><stop offset="1" stopColor="#93d36f" /></linearGradient></defs><rect width="48" height="48" fill="url(#gs)" /><path d="M0 0H48L0 40Z" fill="#fff" opacity=".1" /><circle cx="28" cy="20" r="14" fill="none" stroke="#f3f8f2" strokeWidth="4" /><path d="M18 29L6 42" stroke="#f3f8f2" strokeWidth="5.500" strokeLinecap="round" /></I>;
const Quick = () => (
  <I><rect width="41" height="48" fill="#fdc92e" /><path d="M0 0H9L0 14Z" fill="#8e1246" /><rect y="16" width="7" height="16" fill="#b0688a" /><path d="M21 0H30C22 8 26 14 33 18C38 22 36 28 41 32V40C30 34 32 26 24 20C18 14 18 6 21 0Z" fill="#2f6fd8" /><path d="M1 10L12 4L17 7L7 12Z" fill="#2e9a2e" /><rect x="10" y="19" width="6" height="9" fill="#2c8a7a" /><path d="M16 48C18 38 30 34 41 40V48Z" fill="#7aa0e8" /><path d="M0 38C8 32 14 36 20 31" stroke="#444" strokeWidth="2.500" fill="none" /><path d="M11 48L18 41H28L24 48Z" fill="#2f6fd8" /><path d="M21 29L25 18L43 0L48 4L31 24Z" fill="#93400f" /><path d="M21 29L25 19L30 24Z" fill="#e8b98a" /></I>
);

/* small dock drawings */
const Sheet = ({ minus }) => <I s={32} vb={32}><rect x="3" y="4" width="23" height="23" fill="#f4f4f4" stroke="#888" strokeWidth="2" /><Plus x={minus ? 18 : 18.500} y={minus ? 21 : 20} s={0.65} minus={minus} /></I>;
const Refresh = () => <I s={32} vb={32}><path d="M2 15C2 3 16 -1 23 6L29 2V14H17L20 10C14 6 8 8 7 15Z" fill="#6d9ad0" stroke="#4a7ab5" /><path d="M30 17C30 29 16 33 9 26L3 30V18H15L12 22C18 26 24 24 25 17Z" fill="#4a80c0" stroke="#3a69a5" /></I>;
const Filter = () => <I s={32} vb={32}><path d="M3 6L13 18V28L19 31V18L29 6Z" fill="#6d97c4" stroke="#415a75" strokeWidth="1.500" /><rect x="2.500" y="2" width="27" height="5" fill="#fdeb4a" stroke="#b59a10" /></I>;
const Collapse = ({ down }) => <I s={32} vb={32}><path d="M1 4.500H29M4 5V27M4 12.500H10M4 24.500H10" stroke="#888" strokeWidth="1.800" fill="none" /><rect x="10" y="10" width="5" height="5" fill="#ffd" stroke="#f08c00" strokeWidth="1.800" /><rect x="10" y="22" width="5" height="5" fill="#ffd" stroke="#f08c00" strokeWidth="1.800" /><path d="M21 1L30 12H25V27H17V12H12Z" transform={down ? "rotate(180 21 14)" : ""} fill="#6d97c4" stroke="#2f4e73" strokeWidth="1.300" /></I>;
const Brush = () => <I s={32} vb={32}><path d="M7 6L20 4L16 12L5 13Z" fill="#f8e04a" /><path d="M4 11L14 11L12 19L3 18Z" fill="#6d9ad0" /><path d="M2 18L14 18L16 25L1 23Z" fill="#e03c3c" /><path d="M10 18L18 12L25 20L17 28Z" fill="#d8a860" stroke="#a87830" /><path d="M13 21L17 25M16 18L20 23" stroke="#a87830" /><path d="M21 16L29 6" stroke="#b98136" strokeWidth="3.500" strokeLinecap="round" /></I>;
const AddGroup = () => <I s={32} vb={32}><path d="M2 13V29H20M6 9V25H22M10 5H27V22H10Z" fill="#eee" stroke="#888" strokeWidth="1.600" /><path d="M15 20V4Q18 0 20 4V22Q17 25 15 20" fill="none" stroke="#2f4e73" strokeWidth="1.500" /><Plus x={18} y={20} s={0.65} /></I>;
const Eye = () => <I s={32} vb={32}><path d="M1 17Q15 4 31 18Q16 30 1 17Z" fill="#fff" stroke="#777" strokeWidth="1.500" /><path d="M2 9Q14 2 29 10" fill="none" stroke="#888" strokeWidth="1.300" /><circle cx="15.500" cy="15.500" r="7" fill="#6d97c4" stroke="#2f4e73" /><circle cx="15.500" cy="15" r="3" fill="#111" /><circle cx="17" cy="13" r="1.200" fill="#fff" /><path d="M25 27H34L29.500 31Z" fill="#555" /></I>;
const Eps = () => <I s={32} vb={32}><text x="0" y="20" fontSize="41" fill="#5e2f6b" stroke="#5e2f6b" strokeWidth=".6" fontFamily="Liberation Serif">ε</text><path d="M15 17H30V31H25V24L22.500 21L20 24V31H15Z" fill="#b5b5b5" stroke="#999" /></I>;
const DockBtns = () => (
  <>
    <I s={11} vb={11}><rect x=".5" y=".5" width="10" height="10" rx="2" fill="none" stroke="#555" /><rect x="2.500" y="4.500" width="4" height="4" fill="none" stroke="#555" /><path d="M4.500 4V2.500H8.500V6.500H7" fill="none" stroke="#555" /></I>
    <I s={11} vb={11}><rect x=".5" y=".5" width="10" height="10" rx="2" fill="none" stroke="#555" /><path d="M3 3L8 8M8 3L3 8" stroke="#555" strokeWidth="2" /></I>
  </>
);
const TI = ({ children }) => <I s={20} vb={20}>{children}</I>;
const folder = "M2 3H8L10 5H18.500V18H2Z";
const treeIcons = {
  star: <TI><path d="M10.500 1L13 8H20L14.500 12L16.500 19L10.500 15L4.500 19L6.500 12L1 8H8Z" fill="#fdf36a" stroke="#c4a000" /></TI>,
  book: <TI><rect x="4" y="2" width="15" height="16" fill="#ddd" stroke="#bbb" /><rect x="2" y="2" width="4" height="17" fill="#eee" stroke="#aaa" /><path d="M12 1H16V9L14 11L12 9Z" fill="#6d97c4" /></TI>,
  proj: <TI><path d={folder} fill="#b4dc50" stroke="#888" /><path d="M3 5L17 17" stroke="#fff" strokeWidth="1.500" /><path d="M13 5L17 7L15 11L11 13L9 8Z" fill="#0a8a0a" /></TI>,
  home: <TI><path d={folder} fill="#f4f4f4" stroke="#999" /><path d="M6 11L10.500 7L15 11M7.500 11V15.500H13.500V11" fill="none" stroke="#444" strokeWidth="1.300" /></TI>,
  drive: <TI><path d={folder} fill="#ededed" stroke="#999" strokeWidth="1.300" /></TI>,
  gpkg: <Gpkg s={20} />,
  feather: <Feather s={20} />,
  pg: <TI><path d="M2 3Q6 0 10 2Q16 -1 20 3Q20 9 16 12L19 13Q16 14 14 13V18Q11 21 9 18L8 13L5 14Q1 9 2 3Z" fill="#6d97c4" stroke="#2f4e73" /><path d="M8 3Q6 8 9 12M13 4Q15 9 13 12" stroke="#2f4e73" fill="none" /></TI>,
};

/* ---------- data ---------- */
const menus = [["Pro", "j", "ect", 76], ["", "E", "dit", 42], ["", "V", "iew", 52], ["", "L", "ayer", 58.5], ["", "S", "ettings", 87.5], ["", "P", "lugins", 79], ["Vect", "o", "r", 69.5], ["", "R", "aster", 70], ["", "D", "atabase", 101], ["", "W", "eb", 50], ["", "M", "esh", 57], ["Pro", "c", "essing", 117], ["", "H", "elp", 49]];
const tree = [["star", 0, "Favorites", 98], ["book", 1, "Spatial Bookmarks", 202.5], ["proj", 1, "Project Home", 149], ["home", 1, "Home", 64.5], ["drive", 1, "C:\\", 33], ["gpkg", 0, "GeoPackage", 134.5], ["feather", 0, "SpatiaLite", 107], ["pg", 0, "PostGIS", 86]];
const layers = [
  { n: "Watersheds download", w: 277, c: "#e3b436", b: "#7d6420", off: 1, mr: 7 },
  { n: "Watersheds", w: 147, hatch: 1, off: 1, mr: 7 },
  { n: "Polygonal landslides", w: 257, c: "#e66f48", b: "#7d3e2a", off: 1, mr: 6 },
  { n: "building_yes", w: 161, c: "#4034f5", b: "#2c2a9c", sel: 1, mem: "#4f6c8c", mr: 5 },
  { n: "building_yes", w: 161, dot: 1, mem: "#666", mr: 7 },
  { n: "GIS4Schools_GeoPackage", w: 329, c: "#3eb6ff", b: "#3eb6ff", mr: 5 },
  { n: "GIS4Schools_GeoPackage", w: 329, c: "#fff", b: "#ff6b6b", mr: 5 },
  { n: "GIS4Schools_GeoPackage", w: 329, c: "#fff", b: "#fff", mr: 5, unchecked: 1 },
];
const help1 = [["This algorithm", 157.5], ["reprojects a vector", 206.5], ["layer. It creates a", 192.5], ["new layer with the", 204], ["same features as the", 230], ["input one, but with", 211], ["geometries", 121.5], ["reprojected to a new", 230], ["CRS.", 51]];
const help2 = [["Attributes are not", 192.5], ["modified by this", 177], ["algorithm.", 110.5]];

function Scroll({ thumb }) {
  return (
    <VScroll>
      <SBtn $b="bottom"><Tri $dir="up" /></SBtn>
      <SBtn $h={thumb} $b="bottom" />
      <Spacer />
      <SBtn $b="top"><Tri /></SBtn>
    </VScroll>
  );
}

const Gap = styled.div`height: 341px;`;
const InfoSmall = () => (
  <I s={28} vb={28}><circle cx="14" cy="14" r="13" fill="#6d97c4" stroke="#3f6ba0" strokeWidth="1.500" /><circle cx="15.500" cy="7" r="2" fill="#fff" /><path d="M11 12H16L13 20H16" stroke="#fff" strokeWidth="2.500" fill="none" /></I>
);

export default function App() {
  return (
    <>
      <Global />
      <Window>
        <TitleBar>
          <QLogo s={20} />
          <Fit w={147}>*GIS4SCHOOLS - QGIS</Fit>
          <WinButtons>
            <I s={12} vb={12}><path d="M0 6.500H12" stroke="#777" /></I>
            <I s={12} vb={12}><path d="M.5 3.500H8.500V11.500H.5ZM3.500 3V.5H11.500V8.500H9" fill="none" stroke="#777" /></I>
            <I s={12} vb={12}><path d="M.5 .5L11.500 11.500M11.500 .5L.5 11.500" stroke="#777" /></I>
          </WinButtons>
        </TitleBar>
        <MenuBar>
          {menus.map(([a, b, c, w]) => <Fit key={a + b + c} w={w}>{a}<u>{b}</u>{c}</Fit>)}
        </MenuBar>
        <Toolbar>
          <Slot $w={14.5}><Handle /></Slot>
          <Slot><NewDoc /></Slot><Slot><Open /></Slot><Slot><Save /></Slot><Slot><Layout /></Slot><Slot><Manager /></Slot><Slot><StyleMgr /></Slot>
          <Slot $w={21}><Handle /></Slot>
          <Slot $w={55}><Hand /></Slot><Slot><Pan /></Slot>
          <Slot><ZoomSign /></Slot><Slot><ZoomSign minus /></Slot><Slot><ZoomFull /></Slot>
          <Slot><Lens pre={<Sq f="#fbe54b" s="#c4a000" />} /></Slot>
          <Slot><Lens pre={<Sq f="#e4e4e4" s="#999" />} /></Slot>
          <Slot><Lens dim pre={<Sq f="#f2f2f2" s="#d0d0d0" />}><text x="16" y="26" fontSize="20" fontWeight="700" fill="#b9b9b9" fontFamily="Liberation Sans">1:1</text></Lens></Slot>
          <Slot><Lens /></Slot><Slot><Lens dim /></Slot>
          <Slot><Book /></Slot><Slot><Marker /></Slot><Slot><Book mark /></Slot><Slot><Redo /></Slot>
          <Slot $w={19}><Handle /></Slot>
          <Slot $w={40}><Info arrow /></Slot><Slot $w={72}><GearRun /></Slot><Slot $w={15}><Tri /></Slot>
          <Pressed $w={56}><SelectIcon /></Pressed><Pressed $w={15}><Tri /></Pressed>
          <Slot><FormIcon /></Slot><Slot $w={15}><Tri /></Slot><Slot><Yellow /></Slot><Slot><Table /></Slot>
          <Slot><Abacus /></Slot><Slot><BlueGear /></Slot><Slot><Sigma /></Slot><Slot><Ruler /></Slot><Slot $w={16}><Tri /></Slot>
          <Pressed $w={56}><Tip /></Pressed>
          <Spacer /><Slot $w={22}><More /></Slot>
        </Toolbar>
        <Toolbar $t={2}>
          <Slot $w={14.5}><Handle /></Slot>
          <Slot><AddLayer /></Slot><Slot><Gpkg star /></Slot><Slot><Shp /></Slot><Slot><Feather star /></Slot><Slot><Chip /></Slot>
          <Slot $w={8}><Sep /></Slot><Slot $w={59}><Virtual /></Slot>
          <Slot $w={20}><Handle /></Slot>
          <Slot $w={50}><Pencils /></Slot><Slot $w={80}><Pencil /></Slot>
          <Spacer />
          <Slot $w={57}><LabelIcon /></Slot><Slot $w={21}><Handle /></Slot>
          <Slot $w={50}><WebGlobe plus /></Slot><Slot $w={12} /><Slot $w={24}><More /></Slot><Slot $w={14}><Handle /></Slot>
          <Slot $w={58}><Python /></Slot><Slot $w={14}><More /></Slot><Slot $w={24}><Handle /></Slot>
          <Slot $w={46}><HelpBook /></Slot><Slot $w={9} /><Slot $w={16}><Handle /></Slot><Slot $w={3} />
        </Toolbar>
        <Toolbar>
          <Slot $w={15}><Handle /></Slot>
          <Pressed $w={56}><Magnet /></Pressed>
          <Slot $w={64}><SnapV /></Slot><Slot $w={51}><SnapDots /></Slot>
          <Field $w={158} $h={36} $pl={5}><Fit w={14}>3</Fit><SpinSide><Tri $dir="up" /><Tri /></SpinSide></Field>
          <Slot $w={1} />
          <Field $w={200} $h={38} $combo><Fit w={26}>px</Fit></Field>
        </Toolbar>
        <Toolbar $h={62}>
          <Slot $w={14}><Handle /></Slot><Slot $w={57}><MiniGlobe /></Slot><Slot $w={23}><Handle /></Slot>
          <Slot $w={48}><Osm /></Slot><Slot $w={29}><Handle /></Slot><Slot $w={44}><GreenSearch /></Slot><Slot $w={70}><Quick /></Slot>
        </Toolbar>
        <Main>
          <Side>
            <DockTitle $h={34} $t={1}><Fit w={53}>Browser</Fit><Spacer /><DockBtns /></DockTitle>
            <DockTools $h={46}>
              <Slot $w={41}><Sheet /></Slot><Slot $w={41}><Refresh /></Slot><Slot $w={41}><Filter /></Slot><Slot $w={41}><Collapse /></Slot>
              <Slot $w={41}><Pressed $w={40} $h={39}><InfoSmall /></Pressed></Slot>
            </DockTools>
            <ListFrame $h={253}>
              <Rows $t={1}>
                {tree.map(([ic, arr, t, w]) => (
                  <TreeRow key={t}><TreeArrow>{arr ? <Tri $dir="right" /> : null}</TreeArrow><TreeIcon>{treeIcons[ic]}</TreeIcon><Fit w={w}>{t}</Fit></TreeRow>
                ))}
              </Rows>
              <Scroll thumb={64} />
            </ListFrame>
            <DockTitle $h={7} $t={0}><Dots /></DockTitle>
            <DockTitle $h={34} $t={0}><Fit w={41}>Layers</Fit><Spacer /><DockBtns /></DockTitle>
            <DockTools $h={45}>
              <Slot $w={41}><Brush /></Slot><Slot $w={41}><AddGroup /></Slot><Slot $w={41}><Eye /></Slot><Slot $w={41}><Filter /></Slot>
              <Slot $w={41}><Eps /></Slot><Slot $w={16}><Tri /></Slot><Slot $w={41}><Collapse down /></Slot><Slot $w={41}><Collapse /></Slot><Slot $w={40}><Sheet minus /></Slot>
            </DockTools>
            <ListFrame $h={235}>
              <Rows>
                {layers.map((l, i) => (
                  <LayerRow key={i} $sel={l.sel} $off={l.off}>
                    <Check on={!l.off && !l.unchecked} />
                    {l.dot ? (
                      <Swatch $c="transparent" $b="transparent" $mr={l.mr}><I s={16} vb={16}><circle cx="9" cy="8" r="5" fill="#9a7fb8" stroke="#444" /></I></Swatch>
                    ) : l.hatch ? (
                      <Swatch $c="#fff" $b="#000" $mr={l.mr}><I s={16} vb={16}><path d="M0 12L12 0M6 16L16 6M.5 .5H15.500V15.500H.5Z" fill="none" stroke="#000" strokeWidth="1.500" /></I></Swatch>
                    ) : (
                      <Swatch $c={l.c} $b={l.b} $mr={l.mr} />
                    )}
                    <RowName><Fit w={l.w}>{l.sel ? <u>{l.n}</u> : l.n}</Fit></RowName>
                    {l.mem && <MemButton><MemChip c={l.mem} /></MemButton>}
                    <RowMark />
                  </LayerRow>
                ))}
              </Rows>
              <Scroll thumb={39} />
            </ListFrame>
            <HScroll>
              <SBtn $b="right"><Tri $dir="left" /></SBtn><SBtn $w={162} $b="right" /><Spacer /><SBtn $b="left"><Tri $dir="right" /></SBtn><SBtn $w={17} $b="left" />
            </HScroll>
          </Side>
          <MapView />
        </Main>
        <Status>
          <StatusCell $box $w={210} $pl={14} $c="#808080">
            <I s={24} vb={24}><circle cx="10" cy="10" r="8.500" fill="none" stroke="#888" strokeWidth="2" /><path d="M16 16L23 23" stroke="#888" strokeWidth="2.500" /></I>
            <Slot $w={11} /><Fit w={156}>Type to loca...</Fit>
          </StatusCell>
          <StatusCell $w={291} $pl={9}><Fit w={279}>878 feature(s) selected o</Fit></StatusCell>
          <StatusCell $w={130} $pl={8}><Fit w={119}>Coordinate</Fit></StatusCell>
          <StatusCell $box $w={206} $pl={6}><Fit w={188}>465703,5086551</Fit></StatusCell>
          <StatusCell $w={98} $pl={5}>
            <I s={18} vb={18}><circle cx="10" cy="8" r="6" fill="#fff" stroke="#222" strokeWidth="2" /><circle cx="11" cy="8" r="2.500" fill="#222" /><path d="M0 0L7 5M0 5L4 6M7 -2L8 3" stroke="#222" strokeWidth="1.500" /></I>
            <Slot $w={14} /><Fit w={58}>Scale</Fit>
          </StatusCell>
          <StatusCell $box $w={153} $pl={5}><Fit w={90}>1:13776</Fit><Slot $w={37} /><Tri $t={-2} /></StatusCell>
          <StatusCell $w={142} $pl={12}>
            <I s={16} vb={16}><path d="M3 8V4Q8 -2 13 4V8" fill="none" stroke="#555" strokeWidth="2" /><rect y="7" width="16" height="10" rx="1.500" fill="#555" /></I>
            <Slot $w={11} /><Fit w={100}>Magnifier</Fit>
          </StatusCell>
          <StatusCell $box $w={112} $pl={6}><Fit w={63}>100%</Fit><SpinSide><Tri $dir="up" /><Tri /></SpinSide></StatusCell>
          <StatusCell $w={111} $pl={10}><Fit w={91}>Rotation</Fit></StatusCell>
          <StatusCell $box $w={119} $pl={5}><Fit w={54}>0,0 °</Fit><SpinSide><Tri $dir="up" /><Tri /></SpinSide></StatusCell>
          <StatusCell $w={120} $pl={7}><Check on /><Slot $w={8} /><Fit w={77}>Render</Fit></StatusCell>
          <StatusCell $w={190} $pl={7}><WebGlobe s={19} grey /><Slot $w={5} /><Fit w={136}>EPSG:32632</Fit></StatusCell>
          <Slot $w={5} />
          <I s={22} vb={22}><g transform="translate(2 9)"><path d="M10 0C16 0 20 3 20 8C20 11 18 13 16 14.500L18 20L12 16C4 17 0 13 0 8C0 3 4 0 10 0Z" fill="#5a5a5a" /><path d="M4 8H16" stroke="#fff" strokeWidth="2.500" strokeDasharray="2.500 2" /></g></I>
        </Status>

        <Dialog>
          <DialogTitle><QLogo s={20} /><Fit w={103}>Reproject Layer</Fit><Spacer /><I s={12} vb={12}><path d="M0 0L12 12M12 0L0 12" stroke="#000" strokeWidth="1.200" /></I></DialogTitle>
          <DialogBody>
            <TabSide>
              <Tabs><Tab $on $w={155}><Fit w={123}>Parameters</Fit></Tab><Tab $w={69}><Fit w={39}>Log</Fit></Tab></Tabs>
              <Pane>
                <Label $h={42} $pb={1}><Fit w={119}>Input layer</Fit></Label>
                <Row>
                  <Field $combo $w={709}>
                    <I s={20} vb={20}><path d="M1 5Q1 2 5 3Q10 6 15 3Q19 2 19 5V12Q18 15 13 13Q8 12 6 15Q2 18 1 13Z" fill="#dcdcdc" stroke="#999" strokeWidth="1.300" /></I>
                    <Slot $w={4} /><Fit w={288}>building_yes [EPSG:4326]</Fit><Spacer /><Slot $w={30}><Tri /></Slot>
                  </Field>
                  <Button $w={44} $h={37}><Fit w={18}>...</Fit></Button>
                  <Button $w={28} $h={27}><I s={14} vb={14}><path d="M2.500 4Q7 -1 11 3.500Q13 8 7 9.500" fill="none" stroke="#3a8a3a" strokeWidth="4" /><path d="M2.500 4Q7 -1 11 3.500Q13 8 7 9.500" fill="none" stroke="#7cc87c" strokeWidth="2.400" /><path d="M7 5.500V14L2 9.500Z" fill="#5cb05c" stroke="#3a8a3a" strokeWidth=".8" /></I></Button>
                </Row>
                <CheckLine $h={47}><Check on /><CheckText><Fit w={244}>Selected features only</Fit></CheckText></CheckLine>
                <Label $h={39} $pb={4}><Fit w={124}>Target CRS</Fit></Label>
                <Row $a="center">
                  <Field $combo $w={759}><Fit w={588}>Project CRS: EPSG:32632 - WGS 84 / UTM zone 32N</Fit><Spacer /><Slot $w={30}><Tri /></Slot></Field>
                  <Button $w={28} $h={27}><I s={20} vb={20}><circle cx="9.500" cy="10" r="8.500" fill="#a8cdea" stroke="#6d8ba8" /><path d="M0 9Q3 0 9.500 0Q16 0 19 9Z" fill="#aaa" stroke="#777" /><path d="M1 6H18M9.500 0V18M5 1Q2 10 5 17" stroke="#e8e8e8" fill="none" /><rect x="10" y="10" width="9" height="9" rx="1" fill="#c4a000" /><path d="M12 17L17 12" stroke="#fff" strokeWidth="2" /></I></Button>
                </Row>
                <Label $h={44}><Fit w={131}>Reprojected</Fit></Label>
                <Row>
                  <Field $w={743} $pl={3} $c="#808080"><Fit w={271}>[Create temporary layer]</Fit></Field>
                  <Button $w={44} $h={38}><Fit w={18}>...</Fit></Button>
                </Row>
                <CheckLine $h={50}><Check on /><CheckText><Fit w={445}>Open output file after running algorithm</Fit></CheckText></CheckLine>
              </Pane>
            </TabSide>
            <Split><Tri $dir="left" /><Gap /><Dots $v /></Split>
            <HelpBox>
              <HelpTitle><Fit w={186}>Reproject</Fit><Fit w={93}>layer</Fit></HelpTitle>
              <Para $t={11}>{help1.map(([t, w]) => <Fit key={t} w={w}>{t}</Fit>)}</Para>
              <Para $t={12}>{help2.map(([t, w]) => <Fit key={t} w={w}>{t}</Fit>)}</Para>
            </HelpBox>
          </DialogBody>
          <ProgressRow><Progress><Fit w={37}>0%</Fit></Progress><Button $w={82} $dim><Fit w={71.5}>Cancel</Fit></Button></ProgressRow>
          <ButtonRow>
            <Button $w={267}><Fit w={256}>Run as Batch Process...</Fit></Button><Spacer />
            <Button $w={80} $primary><Fit w={42}>Run</Fit></Button><Button $w={80}><Fit w={59}>Close</Fit></Button><Button $w={80}><Fit w={49}>Help</Fit></Button>
          </ButtonRow>
        </Dialog>
      </Window>
    </>
  );
}
